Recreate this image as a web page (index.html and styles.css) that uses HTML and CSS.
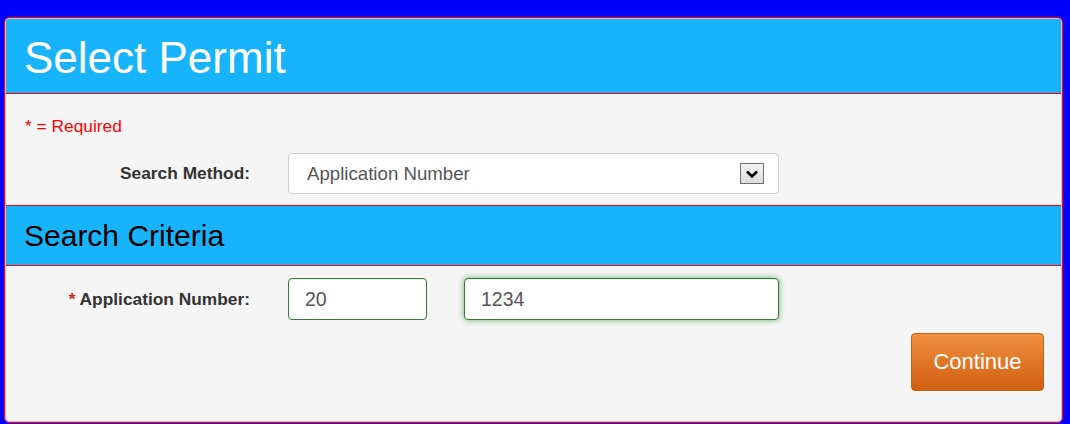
FILE: index.html
```html
<!DOCTYPE html>
<html lang="en">
<head>
    <meta charset="UTF-8">
    <meta name="viewport" content="width=device-width, initial-scale=1.0">
    <title>Select Permit</title>
    <link rel="stylesheet" href="styles.css">
</head>
<body>
    <div class="panel">
        <div class="panel-inner">
            <div class="panel-heading">
                <h1>Select Permit</h1>
            </div>

            <div class="section">
                <p class="required-note">* = Required</p>
                <div class="form-row">
                    <label class="field-label" for="searchMethod">Search Method:</label>
                    <div class="select-box" id="searchMethod">
                        <span>Application Number</span>
                        <span class="select-arrow">
                            <svg width="14" height="10" viewBox="0 0 14 10">
                                <path d="M2 2.5 L7 7.5 L12 2.5" fill="none" stroke="#000" stroke-width="2.6"/>
                            </svg>
                        </span>
                    </div>
                </div>
            </div>

            <div class="section-heading">
                <h2>Search Criteria</h2>
            </div>

            <div class="section criteria">
                <div class="form-row">
                    <label class="field-label" for="appYear"><span class="req">*</span> Application Number:</label>
                    <input type="text" id="appYear" class="input input-prefix" value="20">
                    <input type="text" id="appNumber" class="input input-number" value="1234">
                </div>
                <div class="actions">
                    <button class="btn-continue">Continue</button>
                </div>
            </div>
        </div>
    </div>
</body>
</html>
```

FILE: styles.css
```css
* {
    box-sizing: border-box;
}

body {
    margin: 0;
    padding: 17px 7px 1px 4px;
    background-color: #0000ff;
    font-family: "Liberation Sans", Arial, sans-serif;
}

.panel {
    border: 1px solid #ff0000;
    border-radius: 5px;
}

.panel-inner {
    border: 1px solid #f7b3b3;
    border-radius: 4px;
    background-color: #f5f5f5;
    overflow: hidden;
}

.panel-heading {
    background-color: #17b4fc;
    border-bottom: 1px solid #ff0000;
    padding: 3px 0 0 18px;
}

.panel-heading h1 {
    margin: 0;
    font-size: 44px;
    font-weight: normal;
    line-height: 71px;
    color: #fff;
}

.section {
    padding: 20px 0 11px;
}

.required-note {
    margin: 0 0 15px;
    padding-left: 19px;
    font-size: 17.33px;
    line-height: 24px;
    color: #ff0000;
}

.form-row {
    display: flex;
    align-items: center;
}

.field-label {
    width: 244px;
    text-align: right;
    font-weight: bold;
    font-size: 17.33px;
    color: #333;
}

.req {
    color: #e0201c;
}

.select-box {
    display: flex;
    align-items: center;
    justify-content: space-between;
    width: 491px;
    height: 41px;
    margin-left: 38px;
    padding: 0 14px 0 18px;
    background-color: #fff;
    border: 1px solid #ccc;
    border-radius: 4px;
    font-size: 18.67px;
    color: #555;
}

.select-arrow {
    display: flex;
    align-items: center;
    justify-content: center;
    width: 24px;
    height: 21px;
    border: 1px solid #6f6f6f;
    background: linear-gradient(#f3f3f3, #dddddd);
}

.section-heading {
    background-color: #17b4fc;
    border-top: 1px solid #ff0000;
    border-bottom: 1px solid #ff0000;
    padding-left: 18px;
}

.section-heading h2 {
    margin: 0;
    font-size: 30px;
    font-weight: normal;
    line-height: 59px;
    color: #000;
}

.criteria {
    padding: 12px 0 30px;
}

.input {
    height: 42px;
    padding: 0 16px;
    border: 1px solid #3c763d;
    border-radius: 4px;
    background-color: #fff;
    font-family: inherit;
    font-size: 19.5px;
    color: #555;
    box-shadow: inset 0 1px 1px rgba(0, 0, 0, 0.075);
}

.input-prefix {
    width: 139px;
    margin-left: 38px;
}

.input-number {
    width: 315px;
    margin-left: 37px;
    box-shadow: inset 0 1px 1px rgba(0, 0, 0, 0.075), 0 0 6px #67b168;
}

.actions {
    display: flex;
    justify-content: flex-end;
    margin-top: 13px;
    padding-right: 17px;
}

.btn-continue {
    width: 133px;
    height: 58px;
    border: 1px solid #c2610f;
    border-radius: 4px;
    background: linear-gradient(#f1903f, #d05f10);
    font-family: inherit;
    font-size: 22px;
    color: #fff;
    cursor: pointer;
}
```
